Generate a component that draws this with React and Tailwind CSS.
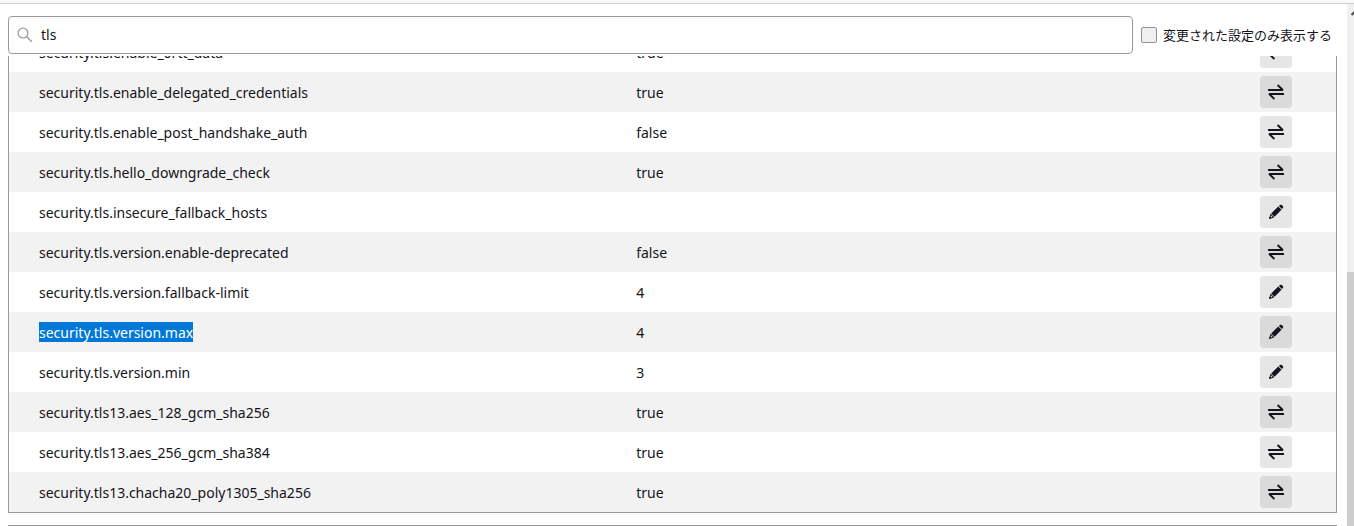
const rows = [
  { name: "security.tls.enable_0rtt_data", value: "true", kind: "toggle" },
  { name: "security.tls.enable_delegated_credentials", value: "true", kind: "toggle" },
  { name: "security.tls.enable_post_handshake_auth", value: "false", kind: "toggle" },
  { name: "security.tls.hello_downgrade_check", value: "true", kind: "toggle" },
  { name: "security.tls.insecure_fallback_hosts", value: "", kind: "edit" },
  { name: "security.tls.version.enable-deprecated", value: "false", kind: "toggle" },
  { name: "security.tls.version.fallback-limit", value: "4", kind: "edit" },
  { name: "security.tls.version.max", value: "4", kind: "edit", selected: true },
  { name: "security.tls.version.min", value: "3", kind: "edit" },
  { name: "security.tls13.aes_128_gcm_sha256", value: "true", kind: "toggle" },
  { name: "security.tls13.aes_256_gcm_sha384", value: "true", kind: "toggle" },
  { name: "security.tls13.chacha20_poly1305_sha256", value: "true", kind: "toggle" },
];

function ToggleIcon() {
  return (
    <svg viewBox="0 0 16 16" className="size-4" fill="none" stroke="currentColor" strokeWidth="1.900" aria-hidden="true">
      <path d="M0 6h15M9.600 1 15 6.200M16 10H1M6.400 15 1 9.800" />
    </svg>
  );
}

function PencilIcon() {
  return (
    <svg viewBox="0 0 16 16" className="size-4" fill="currentColor" aria-hidden="true">
      <path d="m10.900 1.900 1.100-.9c.6-.5 1.300-.4 1.800.1l1 1c.5.5.6 1.200.1 1.800l-.9 1.100z" />
      <path d="m10.200 2.500 3.300 3.300-6.900 7-3.400-3.400z" />
      <path fillRule="evenodd" d="M2.700 9.800 1 14.300c-.2.5.2.900.7.700L6.200 13.300zM3.200 11.600l1.200 1.200-1.300.6-.5-.5z" />
    </svg>
  );
}

function PrefRow({ name, value, kind, selected }) {
  return (
    <tr className="h-10 even:bg-[#f2f2f2]">
      <th scope="row" className="w-[45%] p-0 pl-[30px] text-left font-normal">
        <span className={selected ? "block h-5 w-fit bg-[#0078d7] leading-[22px] text-white" : "block h-5 w-fit leading-[22px]"}>{name}</span>
      </th>
      <td className="p-0 pl-[30px]">
        <span className="block h-5 leading-[22px]">{value}</span>
      </td>
      <td className="w-[120px] p-0 pl-11">
        <button
          type="button"
          aria-label={kind === "toggle" ? "切り替え" : "編集"}
          className="flex size-8 items-center justify-center rounded bg-[#0c0c0d]/10"
        >
          {kind === "toggle" ? <ToggleIcon /> : <PencilIcon />}
        </button>
      </td>
    </tr>
  );
}

export default function App() {
  return (
    <div className="flex h-screen flex-col overflow-hidden bg-white font-['Noto_Sans','Noto_Sans_CJK_JP',sans-serif] text-sm text-[#15141a]">
      <div className="h-1 shrink-0 border-b border-[#cccccc] bg-[#f9f9fb]" />
      <div className="flex min-h-0 flex-1">
        <main className="min-w-0 flex-1 overflow-hidden pt-3 pr-2.5 pl-2">
          <div className="flex items-center gap-2">
            <label className="flex h-[38px] flex-1 items-center gap-2 rounded border border-[#9a9a9d] px-2">
              <svg viewBox="0 0 16 16" className="size-4 shrink-0 text-[#a0a0a2]" fill="none" stroke="currentColor" aria-hidden="true">
                <circle cx="6" cy="6" r="4.900" strokeWidth="1.300" />
                <path d="m9.600 9.600 5.200 5.200" strokeWidth="1.600" />
              </svg>
              <input type="text" aria-label="設定名を検索" defaultValue="tls" className="h-5 min-w-0 flex-1 leading-[22px] outline-none" />
            </label>
            <label className="flex w-[196px] items-center gap-1.5 text-[13px] whitespace-nowrap">
              <input type="checkbox" className="size-4 shrink-0 appearance-none rounded-xs border border-[#8f8f9d] bg-[#f0f0f0] checked:bg-[#0060df]" />
              変更された設定のみ表示する
            </label>
          </div>
          <div className="mt-0.5 overflow-hidden border-x border-b border-[#9a9a9d]">
            <table className="-mt-6 w-full table-fixed border-collapse">
              <tbody>
                {rows.map((row) => (
                  <PrefRow key={row.name} {...row} />
                ))}
              </tbody>
            </table>
          </div>
          <div className="mt-3 h-10 border border-[#9a9a9d]" />
        </main>
        <div className="flex w-[7px] shrink-0 flex-col overflow-hidden bg-[#f0f0f0]">
          <svg viewBox="0 0 7 17" className="h-[17px] w-[7px] shrink-0" fill="none" stroke="#505050" strokeWidth="2" aria-hidden="true">
            <path d="m4.500 11 4-4" />
          </svg>
          <div className="basis-[48%]" />
          <div className="flex-1 bg-[#cdcdcd]" />
        </div>
      </div>
    </div>
  );
}
